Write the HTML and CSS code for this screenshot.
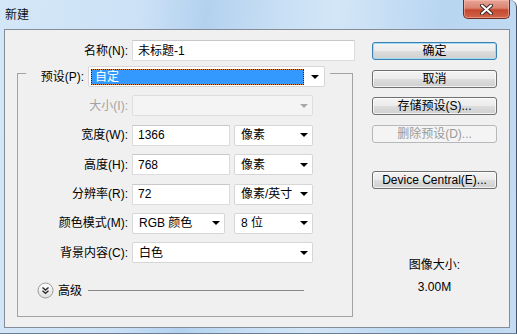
FILE: index.html
```html
<!DOCTYPE html>
<html lang="zh-CN">
<head>
    <meta charset="UTF-8">
    <title>新建</title>
    <link rel="stylesheet" href="styles.css">
</head>
<body>
    <div class="window">
        <div class="titlebar">
            <span class="title">新建</span>
            <button class="close" type="button">
                <svg width="13" height="11" viewBox="0 0 13 11">
                    <path d="M2 1.5 L11 9.5 M11 1.5 L2 9.5" stroke="#3b2a2a" stroke-width="4" stroke-linecap="round"/>
                    <path d="M2 1.5 L11 9.5 M11 1.5 L2 9.5" stroke="#fff" stroke-width="2" stroke-linecap="round"/>
                </svg>
            </button>
        </div>
        <div class="frame">
            <div class="client">
                <div class="main">
                    <div class="row name-row">
                        <span class="lbl name-lbl">名称(N):</span>
                        <div class="field name-field">未标题-1</div>
                    </div>

                    <div class="group">
                        <div class="legend">
                            <span class="lbl legend-lbl">预设(P):</span>
                            <div class="combo preset">
                                <span class="selected">自定</span>
                                <span class="arrow"></span>
                            </div>
                        </div>

                        <div class="rows">
                            <div class="row">
                                <span class="lbl disabled">大小(I):</span>
                                <div class="combo full off"><span></span><span class="arrow"></span></div>
                            </div>
                            <div class="row">
                                <span class="lbl">宽度(W):</span>
                                <div class="field num">1366</div>
                                <div class="combo unit"><span>像素</span><span class="arrow"></span></div>
                            </div>
                            <div class="row">
                                <span class="lbl">高度(H):</span>
                                <div class="field num">768</div>
                                <div class="combo unit"><span>像素</span><span class="arrow"></span></div>
                            </div>
                            <div class="row">
                                <span class="lbl">分辨率(R):</span>
                                <div class="field num">72</div>
                                <div class="combo unit"><span>像素/英寸</span><span class="arrow"></span></div>
                            </div>
                            <div class="row">
                                <span class="lbl">颜色模式(M):</span>
                                <div class="combo mode"><span>RGB 颜色</span><span class="arrow"></span></div>
                                <div class="combo unit"><span>8 位</span><span class="arrow"></span></div>
                            </div>
                            <div class="row">
                                <span class="lbl">背景内容(C):</span>
                                <div class="combo full"><span>白色</span><span class="arrow"></span></div>
                            </div>
                        </div>

                        <div class="advanced">
                            <svg class="expander" width="17" height="17" viewBox="0 0 17 17">
                                <defs>
                                    <linearGradient id="knob" x1="0" y1="0" x2="0" y2="1">
                                        <stop offset="0" stop-color="#ffffff"/>
                                        <stop offset="1" stop-color="#dedede"/>
                                    </linearGradient>
                                </defs>
                                <circle cx="8.5" cy="8.5" r="7.5" fill="url(#knob)" stroke="#9a9a9a"/>
                                <path d="M5.5 5.5 L8.5 8 L11.5 5.5 M5.5 8.8 L8.5 11.3 L11.5 8.8" fill="none" stroke="#2a2a2a" stroke-width="1.4"/>
                            </svg>
                            <span class="adv-text">高级</span>
                            <span class="adv-line"></span>
                        </div>
                    </div>
                </div>

                <div class="side">
                    <button class="btn default" type="button">确定</button>
                    <button class="btn" type="button">取消</button>
                    <button class="btn" type="button">存储预设(S)...</button>
                    <button class="btn" type="button" disabled>删除预设(D)...</button>
                    <button class="btn device" type="button">Device Central(E)...</button>
                    <div class="size-info">
                        <span>图像大小:</span>
                        <span>3.00M</span>
                    </div>
                </div>
            </div>
        </div>
    </div>
</body>
</html>
```

FILE: styles.css
```css
* {
    box-sizing: border-box;
}
html, body {
    margin: 0;
}
body {
    width: 517px;
    height: 336px;
    overflow: hidden;
    background: #fff;
    color: #000;
    font: 12px/14px "Liberation Sans", "Noto Sans CJK SC", sans-serif;
}

/* Window chrome */
.window {
    width: 517px;
    height: 334px;
    display: flex;
    flex-direction: column;
    background: linear-gradient(95deg, #d4e7f8 0%, #cce1f6 26%, #b3d1ef 38%, #c6def4 50%, #d3e6f7 62%, #b8d5f1 82%, #c4dcf3 100%);
    border-right: 1px solid #44566a;
    border-bottom: 1px solid #6a7d92;
    border-top-right-radius: 7px;
}
.titlebar {
    height: 29px;
    display: flex;
    align-items: flex-start;
    padding-left: 5px;
}
.title {
    margin-top: 8px;
    font-size: 12px;
    color: #111;
}
.close {
    margin-left: auto;
    margin-right: 6px;
    width: 47px;
    height: 19px;
    padding: 0;
    display: flex;
    align-items: center;
    justify-content: center;
    border: 1px solid #6e2b20;
    border-top: none;
    border-radius: 0 0 5px 5px;
    background: linear-gradient(#e8a597 0%, #d98372 45%, #c4482f 55%, #d0654a 100%);
    box-shadow: inset 0 0 0 1px rgba(255, 200, 190, 0.5);
}
.frame {
    flex: 1;
    padding: 0 6px 5px 4px;
}
.client {
    height: 299px;
    display: flex;
    background: #f0f0f0;
    border: 1px solid #838c97;
    padding: 10px 0 0 12px;
}

/* Left column */
.main {
    width: 338px;
}
.row {
    display: flex;
    align-items: center;
    height: 21px;
}
.lbl {
    width: 110px;
    margin-right: 4px;
    text-align: right;
    white-space: nowrap;
}
.name-lbl {
    width: 111px;
}
.disabled {
    color: #a3a3a3;
}
.field {
    height: 21px;
    display: flex;
    align-items: center;
    padding-left: 5px;
    background: #fff;
    border: 1px solid #dcdcdc;
    border-top-color: #c9c9c9;
}
.name-field {
    width: 223px;
}
.num {
    width: 98px;
    margin-right: 4px;
}
.combo {
    height: 21px;
    display: flex;
    align-items: center;
    justify-content: space-between;
    padding-left: 6px;
    background: #fff;
    border: 1px solid #d6d6d6;
    border-radius: 2px;
    white-space: nowrap;
}
.arrow {
    width: 0;
    height: 0;
    margin-right: 4px;
    border-left: 4px solid transparent;
    border-right: 4px solid transparent;
    border-top: 4px solid #000;
}
.full {
    width: 181px;
}
.unit {
    width: 79px;
}
.mode {
    width: 93px;
    margin-right: 9px;
}
.off {
    background: #f4f4f4;
    border-color: #dedede;
}
.off .arrow {
    border-top-color: #a8a8a8;
}

/* Preset group */
.group {
    margin-top: 12px;
    width: 336px;
    height: 244px;
    border: 1px solid #a3a3a3;
}
.legend {
    display: flex;
    align-items: center;
    width: 304px;
    height: 21px;
    margin: -8px 0 0 8px;
    padding-right: 5px;
    background: #f0f0f0;
}
.legend-lbl {
    width: 58px;
}
.preset {
    width: 237px;
    padding-left: 2px;
}
.selected {
    width: 213px;
    height: 16px;
    display: flex;
    align-items: center;
    padding-left: 3px;
    color: #fff;
    border: 1px dotted #222;
    background: linear-gradient(#3399ff, #3399ff) padding-box, #d98a2c border-box;
}
.preset .arrow {
    margin-right: 5px;
}
.rows {
    margin-top: 8.4px;
    display: flex;
    flex-direction: column;
    gap: 8.4px;
}
.advanced {
    margin-top: 19px;
    padding-left: 19px;
    display: flex;
    align-items: center;
    height: 17px;
}
.adv-text {
    margin-left: 4px;
}
.adv-line {
    width: 216px;
    height: 1px;
    margin-left: 6px;
    background: #8a8a8a;
}

/* Right column */
.side {
    margin-left: 17px;
    margin-top: 2px;
    width: 125px;
    display: flex;
    flex-direction: column;
    gap: 9.6px;
}
.btn {
    height: 18px;
    padding: 0;
    font: inherit;
    color: #000;
    border: 1px solid #707070;
    border-radius: 3px;
    background: linear-gradient(#f4f4f4 0%, #ebebeb 48%, #dddddd 52%, #cfcfcf 100%);
    box-shadow: inset 0 0 0 1px rgba(255, 255, 255, 0.7);
}
.default {
    border-color: #3c7fb1;
    box-shadow: inset 0 0 0 1px #9fdcf6;
}
.btn:disabled {
    color: #9a9a9a;
    border-color: #b5b9bc;
    background: #f4f4f4;
    box-shadow: none;
}
.device {
    margin-top: 18.6px;
}
.size-info {
    margin-top: 59px;
    display: flex;
    flex-direction: column;
    align-items: center;
    gap: 8px;
}
```
